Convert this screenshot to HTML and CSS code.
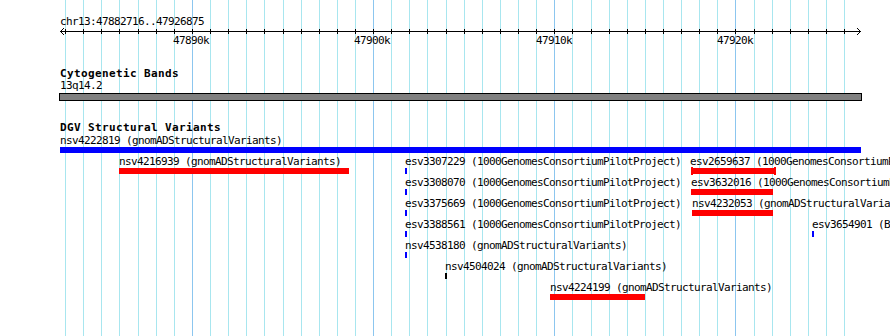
FILE: index.html
```html
<!DOCTYPE html>
<html lang="en">
<head>
    <meta charset="UTF-8">
    <title>chr13:47882716..47926875</title>
    <link rel="stylesheet" href="styles.css">
</head>
<body>

<div class="browser">
    <!-- grid: one line per kb, darker every 10 kb -->
    <svg class="grid" width="890" height="336">
        <path class="minor" d="M65.5 0V336M83.5 0V336M101.5 0V336M119.5 0V336M138.5 0V336M156.5 0V336M174.5 0V336M210.5 0V336M228.5 0V336M246.5 0V336M264.5 0V336M283.5 0V336M301.5 0V336M319.5 0V336M337.5 0V336M355.5 0V336M391.5 0V336M409.5 0V336M427.5 0V336M446.5 0V336M464.5 0V336M482.5 0V336M500.5 0V336M518.5 0V336M536.5 0V336M572.5 0V336M591.5 0V336M609.5 0V336M627.5 0V336M645.5 0V336M663.5 0V336M681.5 0V336M699.5 0V336M717.5 0V336M754.5 0V336M772.5 0V336M790.5 0V336M808.5 0V336M826.5 0V336M844.5 0V336"/>
        <path class="major" d="M192.5 0V336M373.5 0V336M554.5 0V336M735.5 0V336"/>
    </svg>

    <!-- Ruler -->
    <div class="ruler">
        <div class="ruler-name">chr13:47882716..47926875</div>
        <svg class="ruler-line" width="890" height="7">
            <path d="M60 3.5H861M64 0L60.5 3.5L64 7M857 0L860.5 3.5L857 7"/>
            <path d="M65.5 1V6M83.5 1V6M101.5 1V6M119.5 1V6M138.5 1V6M156.5 1V6M174.5 1V6M192.5 1V6M210.5 1V6M228.5 1V6M246.5 1V6M264.5 1V6M283.5 1V6M301.5 1V6M319.5 1V6M337.5 1V6M355.5 1V6M373.5 1V6M391.5 1V6M409.5 1V6M427.5 1V6M446.5 1V6M464.5 1V6M482.5 1V6M500.5 1V6M518.5 1V6M536.5 1V6M554.5 1V6M572.5 1V6M591.5 1V6M609.5 1V6M627.5 1V6M645.5 1V6M663.5 1V6M681.5 1V6M699.5 1V6M717.5 1V6M735.5 1V6M754.5 1V6M772.5 1V6M790.5 1V6M808.5 1V6M826.5 1V6M844.5 1V6"/>
        </svg>
        <div class="ruler-ticks">
            <span style="left:173px">47890k</span>
            <span style="left:354px">47900k</span>
            <span style="left:536px">47910k</span>
            <span style="left:717px">47920k</span>
        </div>
    </div>

    <!-- Cytogenetic Bands -->
    <div class="track">
        <div class="track-title">Cytogenetic Bands</div>
        <div class="band-name">13q14.2</div>
        <div class="band"></div>
    </div>

    <!-- DGV Structural Variants -->
    <div class="track">
        <div class="track-title">DGV Structural Variants</div>
        <div class="rows">
            <div class="row">
                <div class="feat" style="left:60px"><span class="name">nsv4222819 (gnomADStructuralVariants)</span><i class="bar blue" style="width:801px"></i></div>
            </div>
            <div class="row">
                <div class="feat" style="left:119px"><span class="name">nsv4216939 (gnomADStructuralVariants)</span><i class="bar red" style="width:230px"></i></div>
                <div class="feat" style="left:405px"><span class="name">esv3307229 (1000GenomesConsortiumPilotProject)</span><i class="bar blue"></i></div>
                <div class="feat" style="left:690px"><span class="name">esv2659637 (1000GenomesConsortiumPilotProject)</span><i class="bar red capped" style="width:85px"></i></div>
            </div>
            <div class="row">
                <div class="feat" style="left:405px"><span class="name">esv3308070 (1000GenomesConsortiumPilotProject)</span><i class="bar blue"></i></div>
                <div class="feat" style="left:691px"><span class="name">esv3632016 (1000GenomesConsortiumPilotProject)</span><i class="bar red" style="width:82px"></i></div>
            </div>
            <div class="row">
                <div class="feat" style="left:405px"><span class="name">esv3375669 (1000GenomesConsortiumPilotProject)</span><i class="bar blue"></i></div>
                <div class="feat" style="left:692px"><span class="name">nsv4232053 (gnomADStructuralVariants)</span><i class="bar red" style="width:81px"></i></div>
            </div>
            <div class="row">
                <div class="feat" style="left:405px"><span class="name">esv3388561 (1000GenomesConsortiumPilotProject)</span><i class="bar blue"></i></div>
                <div class="feat" style="left:812px"><span class="name">esv3654901 (BanStudy)</span><i class="bar blue"></i></div>
            </div>
            <div class="row">
                <div class="feat" style="left:405px"><span class="name">nsv4538180 (gnomADStructuralVariants)</span><i class="bar blue"></i></div>
            </div>
            <div class="row">
                <div class="feat" style="left:445px"><span class="name">nsv4504024 (gnomADStructuralVariants)</span><i class="bar black"></i></div>
            </div>
            <div class="row">
                <div class="feat" style="left:550px"><span class="name">nsv4224199 (gnomADStructuralVariants)</span><i class="bar red" style="width:95px"></i></div>
            </div>
        </div>
    </div>
</div>

</body>
</html>
```

FILE: styles.css
```css
body {
    margin: 0;
    background: #fff;
}
.browser {
    position: relative;
    z-index: 0;
    width: 890px;
    height: 336px;
    overflow: hidden;
    background: #fff;
    color: #000;
    font-family: "DejaVu Sans Mono", "Liberation Mono", monospace;
    font-size: 11px;
    line-height: 12px;
    letter-spacing: -0.62px;
    white-space: nowrap;
}
.grid {
    position: absolute;
    top: 0;
    left: 0;
    z-index: -1;
    shape-rendering: crispEdges;
}
.grid .minor {
    stroke: #a8e6ef;
}
.grid .major {
    stroke: #8cc6ef;
}

/* ruler */
.ruler {
    padding-top: 16px;
}
.ruler-name {
    padding-left: 60px;
}
.ruler-line {
    display: block;
    shape-rendering: crispEdges;
}
.ruler-line path {
    stroke: #000;
    fill: none;
}
.ruler-ticks {
    position: relative;
    height: 12px;
}
.ruler-ticks span {
    position: absolute;
    top: 0;
}

/* tracks */
.track {
    margin-top: 21px;
}
.track-title {
    padding-left: 60px;
    font-weight: bold;
    letter-spacing: 0.38px;
}
.band-name {
    padding-left: 60px;
}
.band {
    margin: 1px 0 0 59px;
    width: 801px;
    height: 6px;
    border: 1px solid #000;
    background: #808080;
}
.rows {
    padding-top: 1px;
}
.row {
    position: relative;
    height: 21px;
}
.feat {
    position: absolute;
    top: 0;
}
.feat .name {
    display: block;
}
.bar {
    position: relative;
    display: block;
    width: 2px;
    height: 6px;
}
.blue {
    background: #0000ff;
}
.red {
    background: #ff0000;
}
.black {
    background: #000;
}
.capped {
    margin-left: 1px;
}
.capped::before,
.capped::after {
    content: "";
    position: absolute;
    top: -1px;
    width: 2px;
    height: 8px;
    background: #ff0000;
}
.capped::before {
    left: 0;
}
.capped::after {
    right: 0;
}
```
